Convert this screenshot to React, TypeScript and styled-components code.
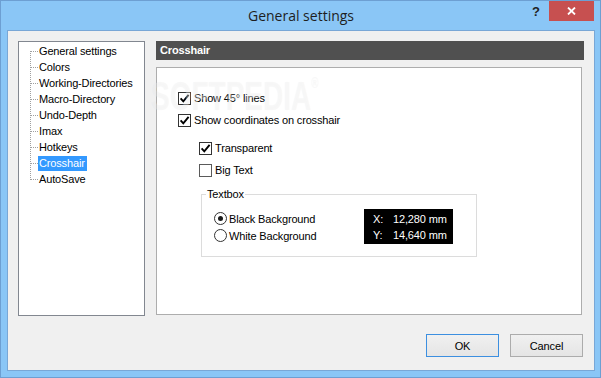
import styled, { createGlobalStyle } from 'styled-components'

const GlobalStyle = createGlobalStyle`
  html, body {
    margin: 0;
    padding: 0;
    background: #ffffff;
  }
  body {
    font-family: "Liberation Sans", Arial, sans-serif;
    font-size: 11px;
    letter-spacing: -0.15px;
    color: #000;
  }
`

const Window = styled.div`
  width: 601px;
  height: 378px;
  box-sizing: border-box;
  border: 1px solid #6d9fd2;
  background: #8ac6f6;
  padding: 0 5px 6px 6px;
  display: flex;
  flex-direction: column;
`

const TitleBar = styled.div`
  height: 29px;
  display: grid;
  grid-template-columns: 1fr auto 1fr;
  align-items: start;
`

const Title = styled.div`
  grid-column: 2;
  align-self: center;
  font-family: "Segoe UI", "Open Sans", sans-serif;
  font-size: 14px;
  letter-spacing: 0;
  color: #1e1e1e;
  padding-bottom: 1px;
`

const Controls = styled.div`
  grid-column: 3;
  justify-self: end;
  display: flex;
  align-items: flex-start;
`

const HelpButton = styled.div`
  width: 26px;
  height: 20px;
  display: flex;
  align-items: center;
  justify-content: center;
  font-weight: bold;
  font-size: 13px;
  color: #222;
`

const CloseButton = styled.div`
  width: 45px;
  height: 20px;
  margin-right: 1px;
  background: #c75050;
  display: flex;
  align-items: center;
  justify-content: center;
`

const Client = styled.div`
  flex: 1;
  background: #f0f0f0;
  border: 1px solid #79a7d6;
  padding: 10px 10px 0 10px;
  display: flex;
  flex-direction: column;
`

const MainRow = styled.div`
  display: flex;
  gap: 11px;
  height: 275px;
`

const Tree = styled.div`
  width: 127px;
  height: 275px;
  box-sizing: border-box;
  border: 1px solid #828790;
  background: #fff;
  padding-top: 1px;
`

const TreeRow = styled.div`
  display: flex;
  height: 16px;
`

const TreeLabel = styled.span<{ $selected?: boolean }>`
  align-self: flex-end;
  height: 15px;
  line-height: 15px;
  padding: 0 2px 0 1px;
  white-space: nowrap;
  background: ${p => (p.$selected ? '#3399ff' : 'transparent')};
  color: ${p => (p.$selected ? '#fff' : '#000')};
`

const Content = styled.div`
  flex: 1;
  display: flex;
  flex-direction: column;
`

const Header = styled.div`
  height: 19px;
  line-height: 19px;
  background: #505050;
  color: #fff;
  font-weight: bold;
  padding-left: 4px;
`

const Panel = styled.div`
  position: relative;
  margin-top: 7px;
  margin-right: 2px;
  height: 248px;
  box-sizing: border-box;
  border: 1px solid #adadad;
  background: #fff;
  padding: 22px 0 0 21px;
`

const Watermark = styled.div`
  position: absolute;
  left: -6px;
  top: 6px;
  font-size: 40px;
  font-weight: bold;
  letter-spacing: 0;
  transform: scaleX(0.7);
  transform-origin: left top;
  color: rgba(255, 255, 255, 0.35);
  text-shadow: 0 0 1px rgba(0, 0, 0, 0.05);
  pointer-events: none;
  white-space: nowrap;

  sup {
    font-size: 14px;
    vertical-align: 22px;
  }
`

const CheckRow = styled.div<{ $gap?: number }>`
  display: flex;
  align-items: center;
  gap: 3px;
  height: 16px;
  margin-top: ${p => p.$gap ?? 0}px;
`

const Box = styled.span<{ $checked?: boolean }>`
  width: 13px;
  height: 13px;
  box-sizing: border-box;
  border: 1px solid ${p => (p.$checked ? '#333' : '#5a5a5a')};
  background: #fff;
  display: flex;
  align-items: center;
  justify-content: center;
`

const SubSection = styled.div`
  margin-left: 21px;
  margin-top: 12px;
`

const Group = styled.fieldset`
  margin: 9px 0 0 2px;
  width: 276px;
  box-sizing: border-box;
  border: 1px solid #dcdcdc;
  padding: 8px 23px 12px 12px;
  min-width: 0;
`

const Legend = styled.legend`
  margin-left: -8px;
  padding: 0 1px;
  line-height: 14px;
`

const GroupBody = styled.div`
  display: flex;
`

const RadioColumn = styled.div`
  width: 150px;
  margin-top: 1px;
`

const RadioRow = styled.div`
  display: flex;
  align-items: center;
  gap: 2px;
  height: 17px;
`

const RadioCircle = styled.span<{ $on?: boolean }>`
  width: 13px;
  height: 13px;
  box-sizing: border-box;
  border: 1px solid #333;
  border-radius: 50%;
  background: #fff;
  display: flex;
  align-items: center;
  justify-content: center;

  &::after {
    content: '';
    width: 5px;
    height: 5px;
    border-radius: 50%;
    background: ${p => (p.$on ? '#1a1a1a' : 'transparent')};
  }
`

const Coords = styled.div`
  width: 89px;
  height: 35px;
  box-sizing: border-box;
  background: #000;
  color: #fff;
  padding: 4px 0 0 9px;
  display: grid;
  grid-template-columns: 20px auto;
  line-height: 13px;
`

const ButtonRow = styled.div`
  display: flex;
  justify-content: flex-end;
  gap: 11px;
  margin-top: 18px;
  margin-right: 1px;
`

const Button = styled.div<{ $default?: boolean }>`
  width: 73px;
  height: 23px;
  box-sizing: border-box;
  border: 1px solid ${p => (p.$default ? '#3c8fe0' : '#acacac')};
  background: linear-gradient(#f0f0f0, #e5e5e5);
  display: flex;
  align-items: center;
  justify-content: center;
`

const treeItems = [
  'General settings',
  'Colors',
  'Working-Directories',
  'Macro-Directory',
  'Undo-Depth',
  'Imax',
  'Hotkeys',
  'Crosshair',
  'AutoSave',
]

const Connector = ({ first, last }: { first: boolean; last: boolean }) => (
  <svg width="19" height="16" shapeRendering="crispEdges">
    <line
      x1="11.5"
      y1={first ? 8 : 0}
      x2="11.5"
      y2={last ? 9 : 16}
      stroke="#a0a0a0"
      strokeDasharray="1 1"
    />
    <line x1="12" y1="8.5" x2="19" y2="8.5" stroke="#a0a0a0" strokeDasharray="1 1" />
  </svg>
)

const Check = ({ checked }: { checked?: boolean }) => (
  <Box $checked={checked}>
    {checked && (
      <svg width="11" height="11" viewBox="0 0 11 11">
        <path d="M1.6 5.4 L4.3 8.4 L9.6 1.8" fill="none" stroke="#000" strokeWidth="1.9" />
      </svg>
    )}
  </Box>
)

export default function App() {
  return (
    <>
      <GlobalStyle />
      <Window>
        <TitleBar>
          <Title>General settings</Title>
          <Controls>
            <HelpButton>?</HelpButton>
            <CloseButton>
              <svg width="9" height="8" viewBox="0 0 9 8">
                <path d="M1 0.5 L8 7.5 M8 0.5 L1 7.5" stroke="#fff" strokeWidth="1.8" />
              </svg>
            </CloseButton>
          </Controls>
        </TitleBar>
        <Client>
          <MainRow>
            <Tree>
              {treeItems.map((item, i) => (
                <TreeRow key={item}>
                  <Connector first={i === 0} last={i === treeItems.length - 1} />
                  <TreeLabel $selected={item === 'Crosshair'}>{item}</TreeLabel>
                </TreeRow>
              ))}
            </Tree>
            <Content>
              <Header>Crosshair</Header>
              <Panel>
                <CheckRow>
                  <Check checked />
                  Show 45° lines
                </CheckRow>
                <CheckRow $gap={6}>
                  <Check checked />
                  Show coordinates on crosshair
                </CheckRow>
                <SubSection>
                  <CheckRow>
                    <Check checked />
                    Transparent
                  </CheckRow>
                  <CheckRow $gap={6}>
                    <Check />
                    Big Text
                  </CheckRow>
                  <Group>
                    <Legend>Textbox</Legend>
                    <GroupBody>
                      <RadioColumn>
                        <RadioRow>
                          <RadioCircle $on />
                          Black Background
                        </RadioRow>
                        <RadioRow>
                          <RadioCircle />
                          White Background
                        </RadioRow>
                      </RadioColumn>
                      <Coords>
                        <span>X:</span>
                        <span>12,280 mm</span>
                        <span>Y:</span>
                        <span>14,640 mm</span>
                      </Coords>
                    </GroupBody>
                  </Group>
                </SubSection>
                <Watermark>
                  SOFTPEDIA<sup>®</sup>
                </Watermark>
              </Panel>
            </Content>
          </MainRow>
          <ButtonRow>
            <Button $default>OK</Button>
            <Button>Cancel</Button>
          </ButtonRow>
        </Client>
      </Window>
    </>
  )
}
